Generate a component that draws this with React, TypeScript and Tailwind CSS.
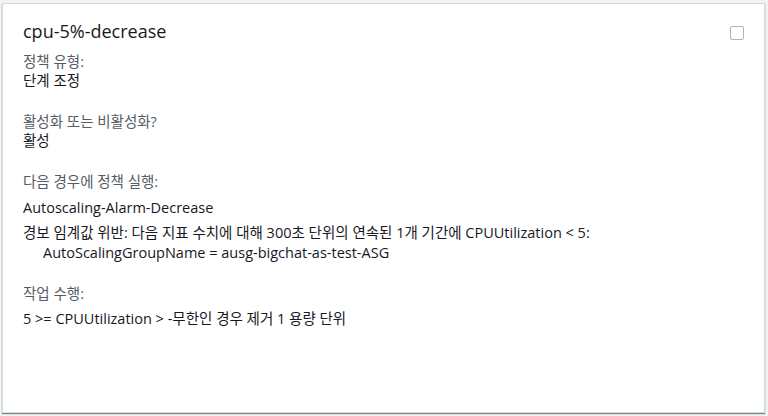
import React from 'react';

const Label: React.FC<{ children: React.ReactNode }> = ({ children }) => (
  <div className="text-[#545b64] text-[14.5px] leading-[19px]">{children}</div>
);

const Value: React.FC<{ children: React.ReactNode; className?: string }> = ({ children, className = '' }) => (
  <div className={`text-[#16191f] text-[14.5px] leading-[19px] ${className}`}>{children}</div>
);

export default function App() {
  return (
    <div
      className="w-[768px] h-[416px] bg-[#f2f3f3] pt-[3px] pl-[2px] pr-[3px] pb-[3px]"
      style={{ fontFamily: '"Open Sans", "Noto Sans CJK KR", sans-serif' }}
    >
      <div className="h-[410px] flex flex-col gap-[22px] bg-white border border-[#d5dbdb] shadow-[0_1px_1px_0_rgba(0,28,36,0.5)] px-[20px] pt-[16px]">
        <div className="flex flex-col gap-[10px]">
          <div className="flex items-start justify-between">
            <h2 className="text-[18px] leading-[22px] text-[#16191f]">cpu-5%-decrease</h2>
            <span className="mt-[6px] w-[14px] h-[14px] border border-[#aab7b8] rounded-[2px] bg-white" />
          </div>
          <div>
            <Label>정책 유형:</Label>
            <Value>단계 조정</Value>
          </div>
        </div>

        <div>
          <Label>활성화 또는 비활성화?</Label>
          <Value>활성</Value>
        </div>

        <div className="flex flex-col gap-[6px]">
          <Label>다음 경우에 정책 실행:</Label>
          <Value className="pt-[1px]">Autoscaling-Alarm-Decrease</Value>
          <div>
            <Value>
              경보 임계값 위반: 다음 지표 수치에 대해 300초 단위의 연속된 1개 기간에 CPUUtilization &lt; 5:
            </Value>
            <Value className="pl-[20px] pt-[1px]">AutoScalingGroupName = ausg-bigchat-as-test-ASG</Value>
          </div>
        </div>

        <div className="flex flex-col gap-[6px]">
          <Label>작업 수행:</Label>
          <Value>5 &gt;= CPUUtilization &gt; -무한인 경우 제거 1 용량 단위</Value>
        </div>
      </div>
    </div>
  );
}
